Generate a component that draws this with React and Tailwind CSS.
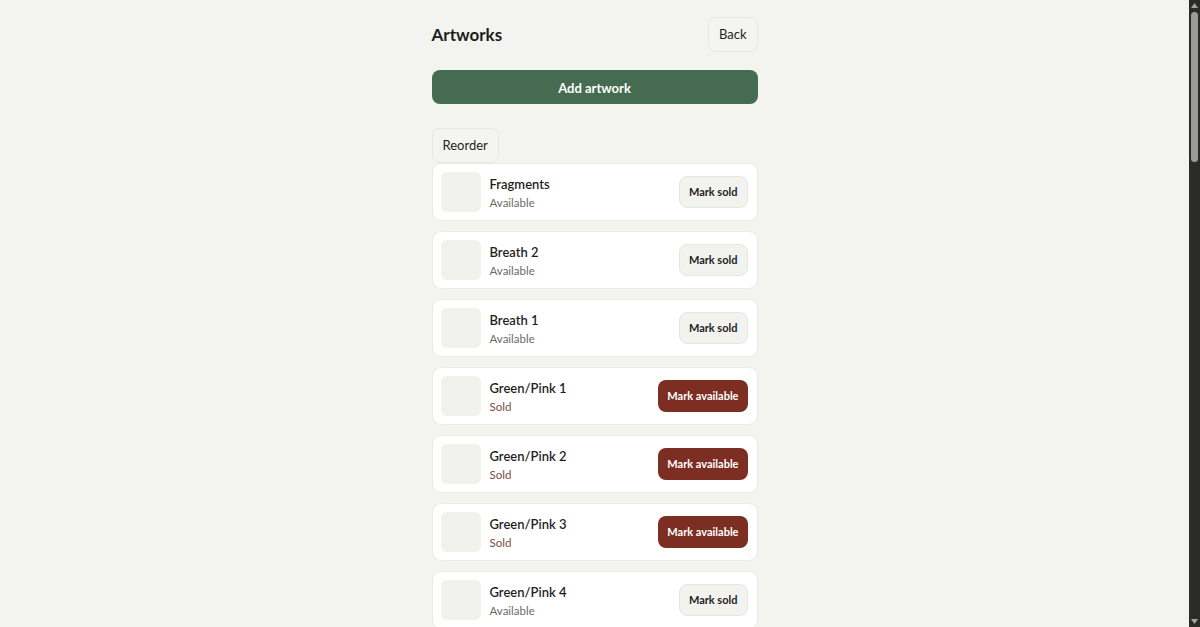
const artworks = [
  { id: 1, title: "Fragments", sold: false },
  { id: 2, title: "Breath 2", sold: false },
  { id: 3, title: "Breath 1", sold: false },
  { id: 4, title: "Green/Pink 1", sold: true },
  { id: 5, title: "Green/Pink 2", sold: true },
  { id: 6, title: "Green/Pink 3", sold: true },
  { id: 7, title: "Green/Pink 4", sold: false },
  { id: 8, title: "Green/Pink 5", sold: false },
  { id: 9, title: "Green/Pink 6", sold: true },
  { id: 10, title: "Tide 1", sold: false },
  { id: 11, title: "Tide 2", sold: false },
  { id: 12, title: "Tide 3", sold: true },
  { id: 13, title: "Moss", sold: false },
  { id: 14, title: "Quiet Field", sold: false },
  { id: 15, title: "Study in Ochre", sold: true },
  { id: 16, title: "Study in Blue", sold: false },
  { id: 17, title: "Study in Red", sold: false },
  { id: 18, title: "Layers 1", sold: false },
  { id: 19, title: "Layers 2", sold: true },
  { id: 20, title: "Layers 3", sold: false },
  { id: 21, title: "Horizon", sold: false },
  { id: 22, title: "Dusk", sold: true },
  { id: 23, title: "Dawn", sold: false },
  { id: 24, title: "Untitled 1", sold: false },
  { id: 25, title: "Untitled 2", sold: false },
  { id: 26, title: "Untitled 3", sold: true },
  { id: 27, title: "Drift", sold: false },
  { id: 28, title: "Echo", sold: false },
  { id: 29, title: "Stillness", sold: false },
  { id: 30, title: "Bloom", sold: true },
  { id: 31, title: "Shore", sold: false },
  { id: 32, title: "Veil", sold: false },
];

function ArtworkRow({ item }) {
  return (
    <div className="flex h-[58px] items-center rounded-[9px] border border-[#ebebe6] bg-white p-2">
      <div className="h-10 w-10 shrink-0 rounded-md bg-[#f1f1ed]" />
      <div className="ml-[9px] flex min-w-0 flex-1 flex-col pt-[2px]">
        <span className="text-[13px] leading-[19px] font-semibold text-[#1f1f1f]">{item.title}</span>
        <span
          className={
            item.sold
              ? "text-[11.5px] leading-[18px] text-[#7a4d47]"
              : "text-[11.5px] leading-[18px] text-[#6b6b66]"
          }
        >
          {item.sold ? "Sold" : "Available"}
        </span>
      </div>
      {item.sold ? (
        <button className="mr-px h-8 rounded-lg bg-[#7d2e22] px-[9px] text-[11px] font-bold text-white">
          Mark available
        </button>
      ) : (
        <button className="mr-px h-8 rounded-lg border border-[#e6e6e1] bg-[#f2f2ee] px-[9px] text-[11px] font-bold text-[#1f1f1f]">
          Mark sold
        </button>
      )}
    </div>
  );
}

// the browser's own scrollbar is not photographed, so it is drawn as a strip
function ScrollTrack() {
  return (
    <div className="flex w-[11px] shrink-0 flex-col items-center bg-[#2b2b2b]">
      <svg width="7" height="5" viewBox="0 0 7 5" className="mt-[3px]">
        <path d="M3.5 0 L7 5 L0 5 Z" fill="#a3a3a3" />
      </svg>
      <div className="mt-[4px] h-[150px] w-[7px] rounded-full bg-[#9b9b9b]" />
      <div className="flex-1" />
      <svg width="7" height="5" viewBox="0 0 7 5" className="mb-[3px]">
        <path d="M0 0 L7 0 L3.5 5 Z" fill="#a3a3a3" />
      </svg>
    </div>
  );
}

export default function App() {
  return (
    <div className="flex h-screen bg-[#f3f3ef] font-['Lato',sans-serif] text-[#1f1f1f]">
      <div className="flex-1 overflow-y-auto [scrollbar-width:none]">
        <div className="mx-auto w-[326px] pb-10 pt-[17px]">
          <div className="flex items-center justify-between">
            <h1 className="text-[17px] font-bold text-[#1c1c1c]">Artworks</h1>
            <button className="h-[35px] rounded-lg border border-[#e8e8e3] bg-[#f4f4f0] px-[10px] pt-px text-[13px] text-[#1f1f1f]">
              Back
            </button>
          </div>

          <button className="mt-[18px] h-[34px] w-full rounded-lg bg-[#456b50] pt-[3px] text-[13px] font-bold text-white">
            Add artwork
          </button>

          <button className="mt-6 h-[35px] rounded-lg border border-[#e8e8e3] bg-[#f4f4f0] px-[10px] pt-px text-[13px] text-[#1f1f1f]">
            Reorder
          </button>

          <div className="flex flex-col gap-[10px]">
            {artworks.map((item) => (
              <ArtworkRow key={item.id} item={item} />
            ))}
          </div>
        </div>
      </div>
      <ScrollTrack />
    </div>
  );
}
